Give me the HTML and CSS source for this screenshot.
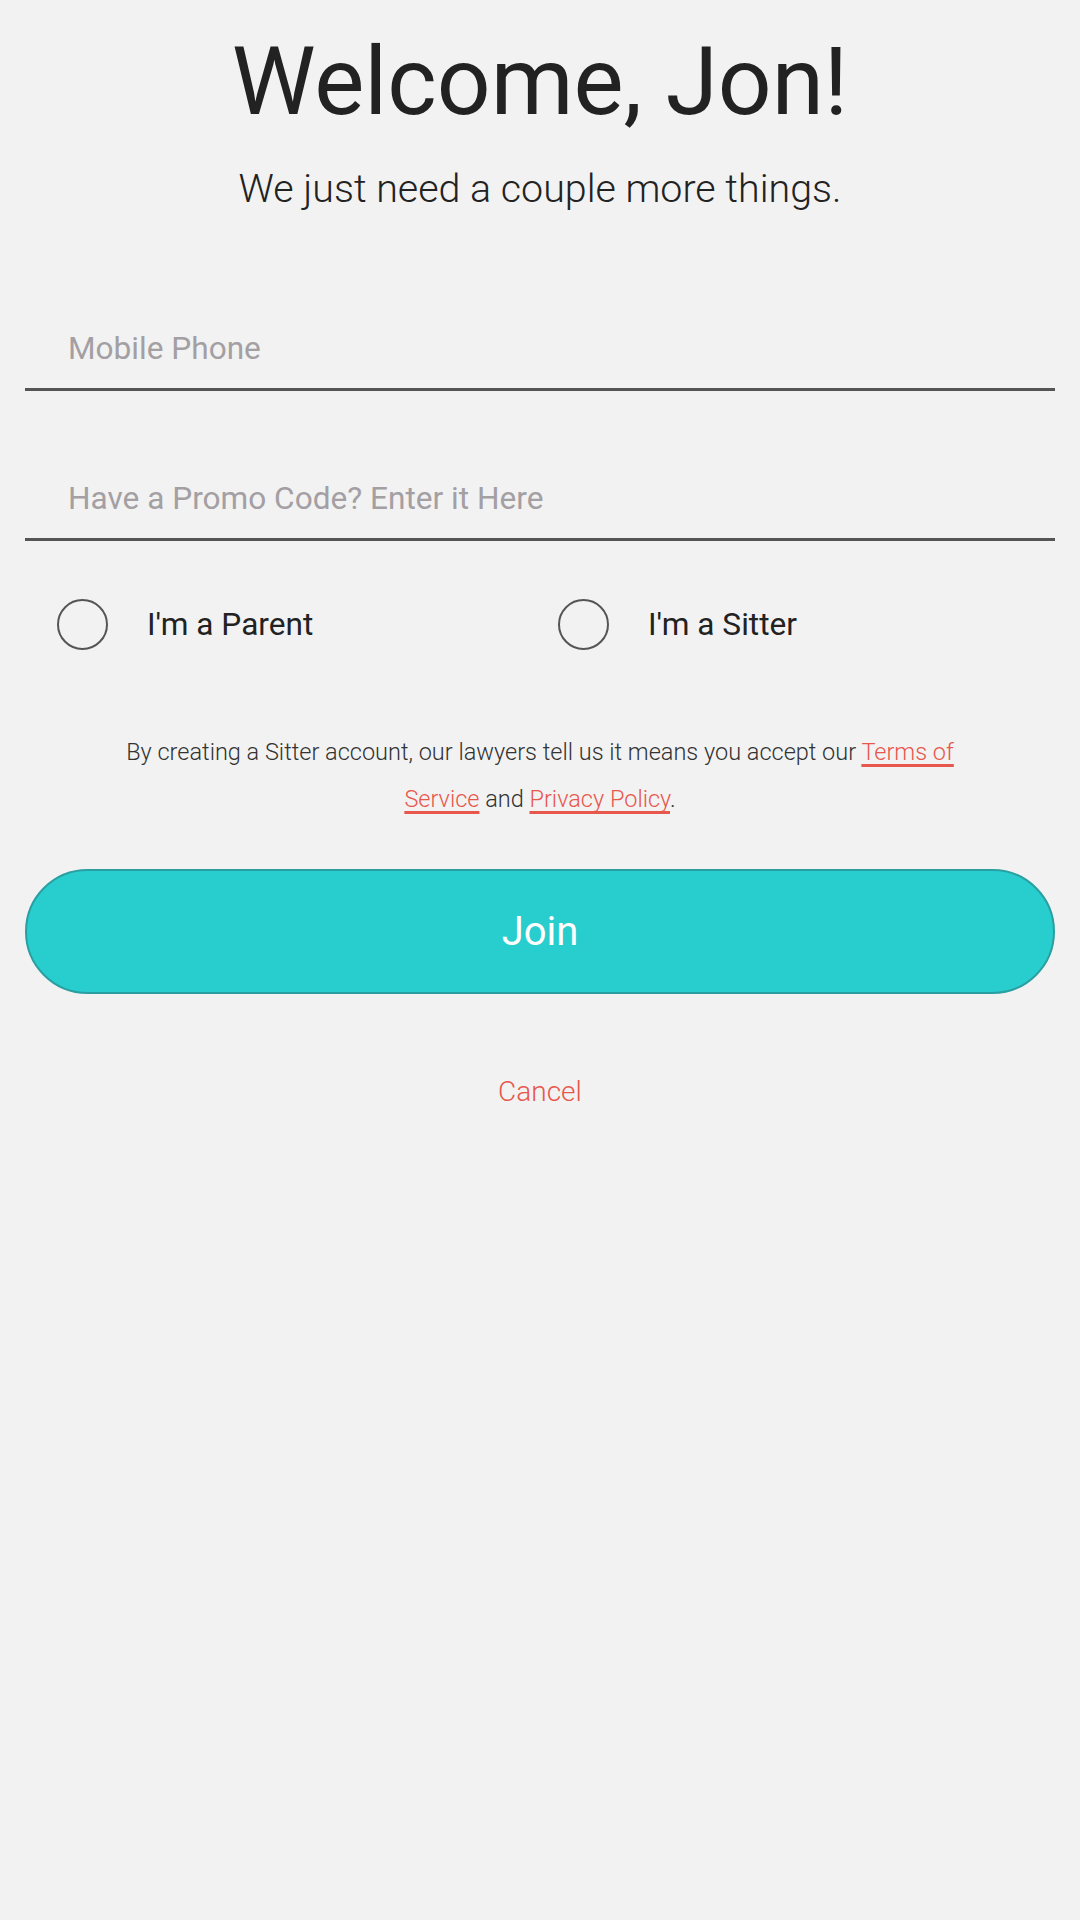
FILE: index.html
```html
<!DOCTYPE html>
<html lang="en">
<head>
<meta charset="utf-8">
<title>Welcome</title>
<link rel="stylesheet" href="styles.css">
</head>
<body>
<main class="page">
  <h1 class="title">Welcome, Jon!</h1>
  <p class="subtitle">We just need a couple more things.</p>

  <div class="field field-phone"><span class="placeholder">Mobile Phone</span></div>
  <div class="field field-promo"><span class="placeholder">Have a Promo Code? Enter it Here</span></div>

  <div class="roles">
    <div class="role role-parent"><span class="radio"></span><span class="role-label">I'm a Parent</span></div>
    <div class="role role-sitter"><span class="radio"></span><span class="role-label">I'm a Sitter</span></div>
  </div>

  <p class="terms">By creating a Sitter account, our lawyers tell us it means you accept our <a class="link" href="#">Terms of Service</a> and <a class="link" href="#">Privacy Policy</a>.</p>

  <button class="join" type="button">Join</button>

  <a class="cancel" href="#">Cancel</a>
</main>
</body>
</html>
```

FILE: styles.css
```css
html, body {
  margin: 0;
  padding: 0;
  background: #f2f2f2;
}
body {
  width: 1080px;
  height: 1920px;
  font-family: Roboto, "Noto Sans", "Liberation Sans", sans-serif;
  color: #222222;
}
.page {
  display: flex;
  flex-direction: column;
  padding: 0 25px;
}
.title {
  margin: 34px 0 0;
  font-size: 94.5px;
  line-height: 96px;
  font-weight: 400;
  text-align: center;
  color: #222222;
}
.subtitle {
  margin: 40px 0 0;
  font-size: 39.4px;
  line-height: 38px;
  font-weight: 300;
  text-align: center;
  color: #222222;
}
.field {
  border-bottom: 3px solid #555555;
  padding: 0 0 23px 43px;
  font-size: 31.6px;
  line-height: 32px;
}
.field-phone { margin-top: 125px; }
.field-promo { margin-top: 92px; }
.placeholder {
  color: #a39fa3;
  font-weight: 400;
}
.roles {
  display: grid;
  grid-template-columns: 501px 1fr;
  margin-top: 58px;
  padding-left: 32px;
}
.role {
  display: flex;
  align-items: center;
  gap: 39px;
}
.radio {
  width: 47px;
  height: 47px;
  border: 2.5px solid #555555;
  border-radius: 50%;
  flex: none;
}
.role-label {
  font-size: 31.6px;
  line-height: 32px;
  color: #222222;
}
.terms {
  margin: 79px auto 0;
  width: 850px;
  font-size: 23.5px;
  line-height: 47px;
  font-weight: 300;
  text-align: center;
  color: #333333;
}
.link {
  color: #e8574c;
  text-decoration: underline;
  text-decoration-thickness: 3px;
  text-underline-offset: 4px;
  text-decoration-skip-ink: none;
}
.join {
  margin-top: 46px;
  height: 125px;
  border: 2px solid #2a9fa1;
  border-radius: 63px;
  background: #28cdcd;
  color: #ffffff;
  font-family: Roboto, "Noto Sans", "Liberation Sans", sans-serif;
  font-size: 40px;
  font-weight: 400;
  padding: 0;
}
.cancel {
  margin-top: 84px;
  align-self: center;
  font-size: 28px;
  line-height: 28px;
  font-weight: 300;
  color: #e8574c;
  text-decoration: none;
}
```
